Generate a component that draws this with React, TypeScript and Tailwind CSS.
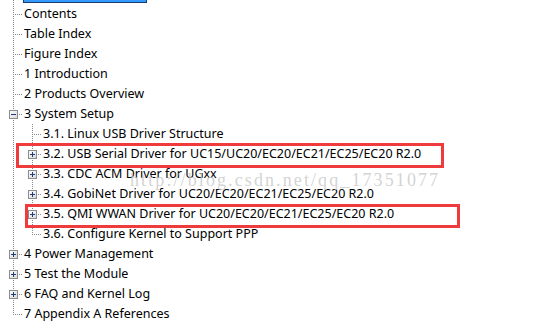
import React from 'react';

type Node = { label: string; level: 0 | 1; expander?: '+' | '-'; last?: boolean };

// rows of the tree, each 20px high
const ROWS: Node[] = [
  { label: 'Contents', level: 0 },
  { label: 'Table Index', level: 0 },
  { label: 'Figure Index', level: 0 },
  { label: '1 Introduction', level: 0 },
  { label: '2 Products Overview', level: 0 },
  { label: '3 System Setup', level: 0, expander: '-' },
  { label: '3.1. Linux USB Driver Structure', level: 1 },
  { label: '3.2. USB Serial Driver for UC15/UC20/EC20/EC21/EC25/EC20 R2.0', level: 1, expander: '+' },
  { label: '3.3. CDC ACM Driver for UGxx', level: 1, expander: '+' },
  { label: '3.4. GobiNet Driver for UC20/EC20/EC21/EC25/EC20 R2.0', level: 1, expander: '+' },
  { label: '3.5. QMI WWAN Driver for UC20/EC20/EC21/EC25/EC20 R2.0', level: 1, expander: '+' },
  { label: '3.6. Configure Kernel to Support PPP', level: 1, last: true },
  { label: '4 Power Management', level: 0, expander: '+' },
  { label: '5 Test the Module', level: 0, expander: '+' },
  { label: '6 FAQ and Kernel Log', level: 0, expander: '+' },
  { label: '7 Appendix A References', level: 0, last: true },
];

const LINE = '#8a8a8a';

// one 19px column of tree connector lines
const Cell = ({ kind, expander, last, h = 20 }: { kind: 'pass' | 'branch'; expander?: '+' | '-'; last?: boolean; h?: number }) => (
  <svg width="19" height={h} className="shrink-0 block" shapeRendering="crispEdges">
    <defs>
      <linearGradient id="exp" x1="0" y1="0" x2="1" y2="1">
        <stop offset="0" stopColor="#ffffff" />
        <stop offset="1" stopColor="#d6d6d6" />
      </linearGradient>
    </defs>
    <line x1="9.5" y1="0" x2="9.5" y2={last ? 11 : h} stroke={LINE} strokeDasharray="1 1" />
    {kind === 'branch' && <line x1="11" y1="10.5" x2="19" y2="10.5" stroke={LINE} strokeDasharray="1 1" />}
    {expander && (
      <g>
        <rect x="5.5" y="6.5" width="8" height="8" fill="url(#exp)" stroke="#8c8c8c" />
        <line x1="7" y1="10.5" x2="12" y2="10.5" stroke="#1f3d7a" />
        {expander === '+' && <line x1="9.5" y1="8" x2="9.5" y2="13" stroke="#1f3d7a" />}
      </g>
    )}
  </svg>
);

export default function App() {
  return (
    <div
      className="relative w-[537px] h-[333px] bg-white overflow-hidden text-[12.5px] text-black"
      style={{ fontFamily: '"Noto Sans", "Noto Sans CJK SC", sans-serif' }}
    >
      {/* selected item scrolled off the top */}
      <div className="flex h-[4px] pl-[4px]">
        <Cell kind="pass" h={4} />
        <div className="w-[124px] h-[4px] -mt-[1px] bg-[#3399ff] border border-[#1a3a6e]" />
      </div>

      {ROWS.map((r, i) => (
        <div key={i} className="flex h-[20px] pl-[4px] items-stretch">
          {r.level === 0 ? (
            <Cell kind="branch" expander={r.expander} last={r.last} />
          ) : (
            <>
              <Cell kind="pass" />
              <Cell kind="branch" expander={r.expander} last={r.last} />
            </>
          )}
          <div className="pl-[1px] leading-[20px] whitespace-nowrap">{r.label}</div>
        </div>
      ))}

      {/* csdn watermark */}
      <div
        className="absolute left-[130px] top-[167px] text-[18px] tracking-[2.1px] text-[#c8c8c8]/80 whitespace-nowrap pointer-events-none"
        style={{ fontFamily: '"Liberation Serif", serif' }}
      >
        http://blog.csdn.net/qq_17351077
      </div>

      {/* red annotation boxes */}
      <div className="absolute left-[16px] top-[143px] w-[428px] h-[25px] border-[3px] border-[#ef3b3b] pointer-events-none" />
      <div className="absolute left-[25px] top-[204px] w-[435px] h-[24px] border-[3px] border-[#ef3b3b] pointer-events-none" />
    </div>
  );
}
